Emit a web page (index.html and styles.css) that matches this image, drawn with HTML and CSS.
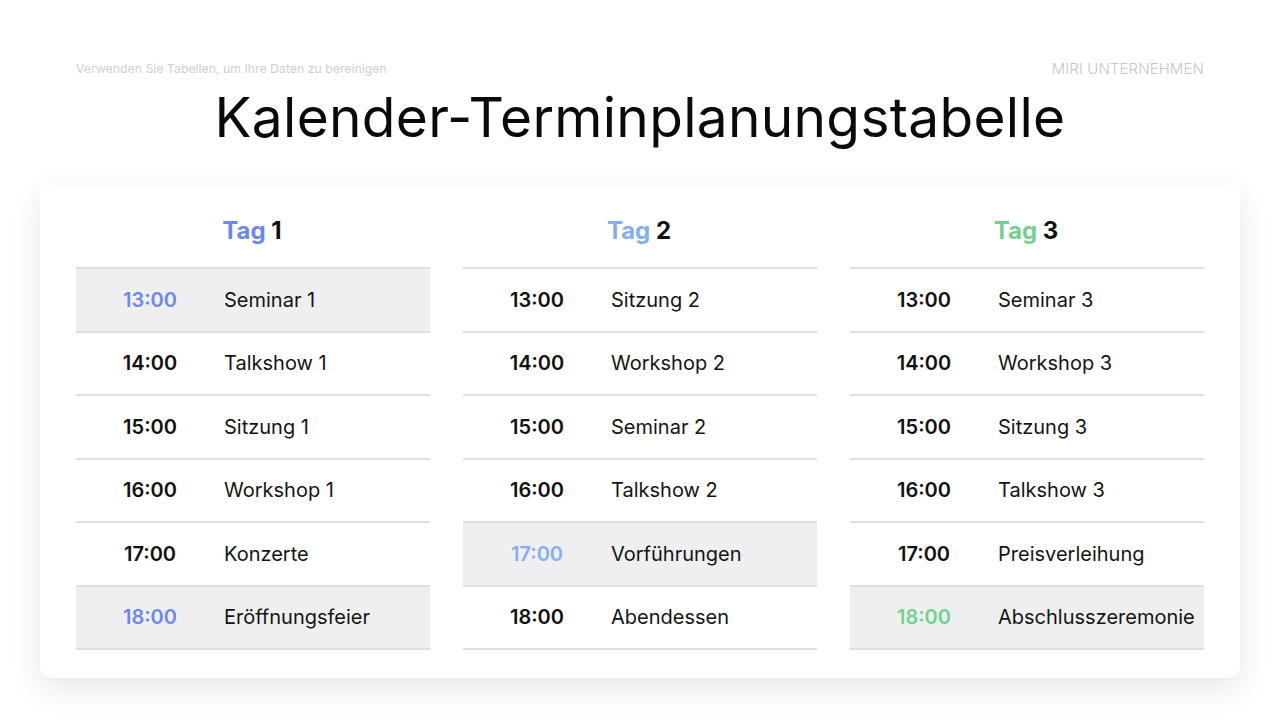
FILE: index.html
```html
<!DOCTYPE html>
<html lang="de">
<head>
<meta charset="utf-8">
<link rel="stylesheet" href="styles.css">
</head>
<body>
<div class="page">
  <div class="top">
    <span class="sub">Verwenden Sie Tabellen, um Ihre Daten zu bereinigen</span>
    <span class="company">MIRI UNTERNEHMEN</span>
  </div>
  <h1 class="title">Kalender-Terminplanungstabelle</h1>
  <div class="card">
    <div class="col c1">
      <div class="head"><span class="tag">Tag</span> 1</div>
      <div class="row hl"><span class="time">13:00</span><span class="ev">Seminar 1</span></div>
      <div class="row"><span class="time">14:00</span><span class="ev">Talkshow 1</span></div>
      <div class="row"><span class="time">15:00</span><span class="ev">Sitzung 1</span></div>
      <div class="row"><span class="time">16:00</span><span class="ev">Workshop 1</span></div>
      <div class="row"><span class="time">17:00</span><span class="ev">Konzerte</span></div>
      <div class="row hl"><span class="time">18:00</span><span class="ev">Eröffnungsfeier</span></div>
    </div>
    <div class="col c2">
      <div class="head"><span class="tag">Tag</span> 2</div>
      <div class="row"><span class="time">13:00</span><span class="ev">Sitzung 2</span></div>
      <div class="row"><span class="time">14:00</span><span class="ev">Workshop 2</span></div>
      <div class="row"><span class="time">15:00</span><span class="ev">Seminar 2</span></div>
      <div class="row"><span class="time">16:00</span><span class="ev">Talkshow 2</span></div>
      <div class="row hl"><span class="time">17:00</span><span class="ev">Vorführungen</span></div>
      <div class="row"><span class="time">18:00</span><span class="ev">Abendessen</span></div>
    </div>
    <div class="col c3">
      <div class="head"><span class="tag">Tag</span> 3</div>
      <div class="row"><span class="time">13:00</span><span class="ev">Seminar 3</span></div>
      <div class="row"><span class="time">14:00</span><span class="ev">Workshop 3</span></div>
      <div class="row"><span class="time">15:00</span><span class="ev">Sitzung 3</span></div>
      <div class="row"><span class="time">16:00</span><span class="ev">Talkshow 3</span></div>
      <div class="row"><span class="time">17:00</span><span class="ev">Preisverleihung</span></div>
      <div class="row hl"><span class="time">18:00</span><span class="ev">Abschlusszeremonie</span></div>
    </div>
  </div>
</div>
</body>
</html>
```
FILE: styles.css
```css
* { box-sizing: border-box; }
html, body { margin: 0; padding: 0; background: #ffffff; }
body { font-family: Inter, "Noto Sans", sans-serif; color: #111; width: 1280px; height: 720px; overflow: hidden; }
.page { padding: 0 40px; }
.top { display: flex; justify-content: space-between; align-items: center; padding: 60px 36px 0; height: 76px; }
.sub { font-size: 12.3px; color: #cfcfcf; font-weight: 400; }
.company { font-size: 15px; color: #c6c6c6; font-weight: 300; letter-spacing: 0.1px; }
.title { margin: 0; text-align: center; font-weight: 400; font-size: 55px; line-height: 66px; height: 109px; padding-top: 8px; color: #0a0a0a; letter-spacing: 0.3px; }
.card { display: flex; gap: 33px; background: #fff; border-radius: 12px; padding: 26px 36px 27px; box-shadow: 0 10px 32px rgba(0,0,0,0.1); height: 493px; }
.col { width: 354px; display: flex; flex-direction: column; }
.head { height: 40px; margin-bottom: 16px; text-align: center; font-size: 24px; font-weight: 700; line-height: 40px; padding-right: 2px; }
.c1 .tag, .c1 .hl .time { color: #6b88ea; }
.c2 .tag, .c2 .hl .time { color: #86adf0; }
.c3 .tag, .c3 .hl .time { color: #74d08e; }
.row { display: flex; align-items: center; height: 63.5px; border-top: 2px solid #dfdfe2; font-size: 20px; }
.row:last-child { border-bottom: 2px solid #dfdfe2; height: 65.5px; }
.row.hl { background: #efeff1; }
.time { width: 148px; text-align: center; font-weight: 600; color: #111; }
.ev { font-weight: 400; color: #141414; }
```
